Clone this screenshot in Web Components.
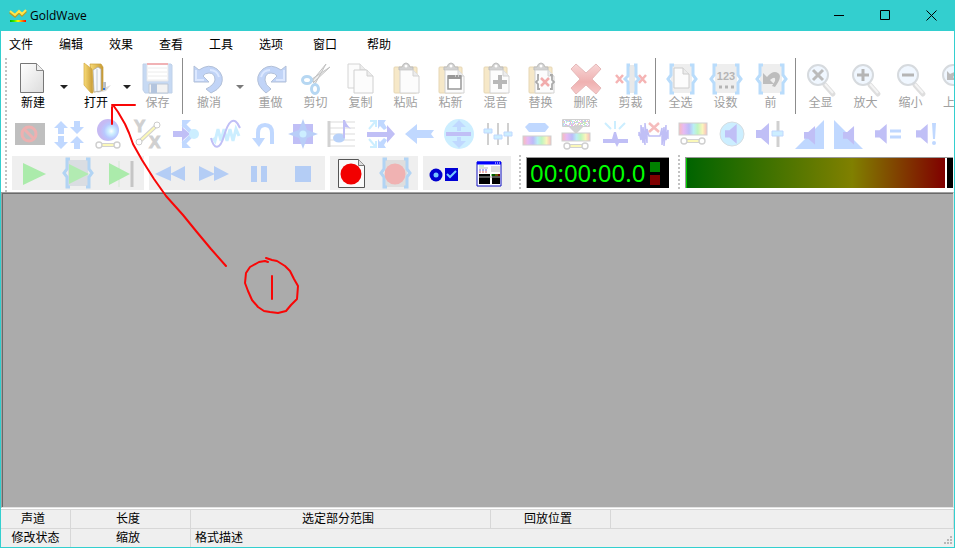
<!DOCTYPE html>
<html lang="zh-CN">
<head>
<meta charset="utf-8">
<title>GoldWave</title>
<style>
html,body{margin:0;height:100%}
body{font:12px/16px "Liberation Sans","Noto Sans CJK SC",sans-serif;color:#000;overflow:hidden}
</style>
</head>
<body>
<gw-app></gw-app>
<script>
const define = (name, css, html) => {
  const t = document.createElement('template');
  t.innerHTML = `<style>*{box-sizing:border-box}button{font:inherit;color:inherit;background:none;border:0;padding:0;margin:0}${css}</style>`;
  customElements.define(name, class extends HTMLElement {
    constructor() {
      super();
      this.attachShadow({mode: 'open'});
    }
    connectedCallback() {
      if (this.shadowRoot.firstChild) return;
      const body = document.createElement('template');
      body.innerHTML = typeof html === 'function' ? html(this) : html;
      this.shadowRoot.append(t.content.cloneNode(true), body.content.cloneNode(true));
    }
  });
};

/* Shared icon parts */
const page = (x, y, w, h, s = '#c4c4c4') => `<path d="M${x} ${y}h${w-6}l6 6v${h-6}h-${w}z" fill="#fcfcfc" stroke="${s}"/><path d="M${x+w-6} ${y}v6h6" fill="#ececec" stroke="${s}"/>`;
const clip = `<rect x="4" y="4" width="23" height="26" rx="1" fill="#f6e8c8" stroke="#e6d6b4"/><path d="M9 7V4h3q1-4 4-4t4 4h3v3z" fill="#d2d2d2" stroke="#bdbdbd"/><circle cx="16" cy="3" r="1.5" fill="#fff"/>` + page(10, 7, 19, 23, '#d2d2d2');
const brace = (c = '#b9dcfb', a = 2, b = 30, w = 3) => `<path d="M${a+6} 2h-3v10l-3 4 3 4v10h3M${b-6} 2h3v10l3 4-3 4v10h-3" fill="none" stroke="${c}" stroke-width="${w}"/>`;
const lens = `<path d="M20 22l8 9" stroke="#dedede" stroke-width="5" stroke-linecap="round"/><path d="M20 21l8 9" stroke="#f4f4f4" stroke-width="2"/><circle cx="13" cy="12" r="10" fill="#f0f7ff" stroke="#d6dade" stroke-width="2"/>`;
const bar = (y, a = 7, b = 25) => `<path d="M${a} ${y}h${b-a}" stroke="#d2d2d2" stroke-width="4"/><path d="M${a} ${y}h${b-a}" stroke="#fbf8b8" stroke-width="2"/><g fill="#fff" stroke="#cfcfcf" stroke-width="1.4"><circle cx="${a}" cy="${y}" r="3"/><circle cx="${b}" cy="${y}" r="3"/></g>`;
const rainbow = (x, y, w, h) => `<defs><linearGradient id="r"><stop offset="0" stop-color="#f8bcbc"/><stop offset=".17" stop-color="#e6baf4"/><stop offset=".36" stop-color="#bcbcf8"/><stop offset=".52" stop-color="#baeef4"/><stop offset=".67" stop-color="#c0f5c0"/><stop offset=".84" stop-color="#faf5bc"/><stop offset="1" stop-color="#f8bcbc"/></linearGradient></defs><rect x="${x}" y="${y}" width="${w}" height="${h}" fill="url(#r)" stroke="#d0d0d0"/>`;
const speaker = (x, y, s = 1) => `<path transform="translate(${x} ${y}) scale(${s})" d="M0 7h5L13 0v22L5 15H0z" fill="#c0bff6"/>`;
const B = '#c0d8ff', P = '#c0bff6', L = '#cceeff';
const noise = () => {
  let r = '', n = 7;
  const c = ['#e8b6ec', '#b8eaf0', '#c4eeb8', '#f2dcb2', '#c4c4ee', '#ffffff', '#ffffff'];
  for (let i = 0; i < 156; i++) {
    n = (n * 1103 + 12345) % 65521;
    r += `<path d="M${3 + i % 26} ${2 + Math.floor(i / 26)}h1v1h-1z" fill="${c[n % 7]}"/>`;
  }
  return r;
};

const icons = {
  new: `<defs><linearGradient id="g" x2="1" y2="1"><stop stop-color="#fff"/><stop offset="1" stop-color="#dcdcdc"/></linearGradient></defs><path d="M4.500 .5h16l7 7v22h-23z" fill="url(#g)" stroke="#777"/><path d="M20.500 .5v7h7" fill="#eee" stroke="#888"/>`,
  open: `<defs><linearGradient id="g"><stop stop-color="#f8db77"/><stop offset="1" stop-color="#c79a34"/></linearGradient></defs><path d="M20 27l12-5-5 6-9 2z" fill="#ddd"/><path d="M11 1h11l2 3v23l-9 2z" fill="url(#g)" stroke="#c99d37" stroke-width=".7"/><path d="M14 7l5-3 3 2v22l-7 1z" fill="#f7f9fb" stroke="#a5a5a5" stroke-width=".7"/><path d="M18 6v22" stroke="#c3ccd4"/><path d="M5 0l8 6 1 24h-2l-7-8z" fill="url(#g)" stroke="#d3a944" stroke-width=".7"/><path d="M24 19h3v8h-3z" fill="#b9bfc5"/><path d="M24 25h2v2h-2z" fill="#3676d8"/>`,
  save: `<path d="M1 1h28l1 1v28H3l-2-3z" fill="#c6d9f3" stroke="#c0d1e8"/><path d="M5 1h21v17H5z" fill="#fff" stroke="#e3e5e9"/><path d="M5 1h21" stroke="#f1b2b5" stroke-width="2"/><path d="M6 5h19M6 9h19M6 13h19M6 17h19" stroke="#ececec"/><path d="M7 21h19v9H7z" fill="#f2f2f2" stroke="#bcc6d4"/><path d="M9 21h6v9H9z" fill="#b4c5de"/>`,
  undo: `<path d="M2 3l5 4q10-7 18-1 8 7 4 16-3 5-10 8l-5-4q8-4 9-9 0-7-6-7-4 0-6 3l6 6H2z" fill="#c1d4f7" stroke="#b2c0d8"/><path d="M4 7v10h8M18 7q7 0 9 7" fill="none" stroke="#dce8ff" stroke-width="2"/>`,
  redo: `<path d="M31 3l-5 4Q16 0 8 6q-8 7-4 16 3 5 7 8l5-4q-6-4-6-9 0-7 6-7 4 0 6 3l-6 6h15z" fill="#c1d4f7" stroke="#b2c0d8"/><path d="M29 7v10h-8M15 7q-7 0-9 7" fill="none" stroke="#dce8ff" stroke-width="2"/>`,
  cut: `<path d="M26 1L15 21l-3-3zM30 4L14 19l-2-3z" fill="#eee" stroke="#c2c2c2"/><g fill="none" stroke="#b6d7f2" stroke-width="3"><ellipse cx="7" cy="17" rx="4.500" ry="3.500"/><ellipse cx="15" cy="26" rx="3.500" ry="4.500"/></g>`,
  copy: page(3, 1, 18, 24, '#d4d4d4') + page(9, 7, 19, 23, '#d0d0d0'),
  paste: clip,
  pastenew: clip + '<path d="M13 13h13v13H13z" fill="#fff" stroke="#999" stroke-width="1.500"/><path d="M13 14h13" stroke="#999" stroke-width="4"/><path d="M20 13h1m2 0h1" stroke="#fff"/>',
  mix: clip + '<path d="M20 12v14M13 19h14" stroke="#b8b8b8" stroke-width="4"/>',
  replace: clip + '<path d="M14 12h-1v5l-2 2 2 2v5h2M25 12h2v5l2 2-2 2v5h-2" fill="none" stroke="#aaa" stroke-width="1.800"/><path d="M16 15l8 8M24 15l-8 8" stroke="#f1acac" stroke-width="2.500"/>',
  delete: `<defs><linearGradient id="g" y2="1" x2="0"><stop stop-color="#f8d6d6"/><stop offset=".6" stop-color="#efb1b1"/><stop offset="1" stop-color="#f7c9c9"/></linearGradient></defs><path d="M6 1l10 9L26 1l5 5-9 10 9 9-5 6-10-9-10 9-5-6 9-9L1 6z" fill="url(#g)" stroke="#e6b9b9"/>`,
  trim: `<rect x="14" y="2" width="6" height="28" fill="#e9e9e9"/><path d="M15 2h-2v11l-3 3 3 3v11h2M19 2h2v11l3 3-3 3v11h-2" fill="none" stroke="#b9dcfb" stroke-width="3"/><path d="M1 12l7 8M8 12l-7 8M24 12l7 8M31 12l-7 8" stroke="#f5b4b4" stroke-width="2.500"/>`,
  selall: `<rect x="6" y="1" width="21" height="29" fill="#eee"/>` + brace('#b9dcfb', 3, 31) + page(9, 5, 15, 20, '#ccc'),
  set: `<rect x="5" y="1" width="22" height="29" fill="#eee"/>` + brace('#b9dcfb', 1, 31) + '<text x="16" y="17" text-anchor="middle" font-family="Liberation Sans, sans-serif" font-weight="bold" font-size="11" fill="#b5b5b5">123</text><path d="M9 24h3m3 0h3m3 0h3" stroke="#b5b5b5" stroke-width="3"/>',
  prev: `<rect x="5" y="1" width="22" height="29" fill="#eee"/>` + brace('#b9dcfb', 2, 31) + '<path d="M8 10v11h11l-4-4q6-5 5 1l-3 5 3 1q8-11 3-14-5-3-11 4z" fill="#bdbdbd"/>',
  zoomall: lens + '<path d="M8 7l10 10M18 7L8 17" stroke="#bbb" stroke-width="3"/>',
  zoomin: lens + '<path d="M13 6v12M7 12h12" stroke="#b5b5b5" stroke-width="3"/>',
  zoomout: lens + '<path d="M7 12h12" stroke="#b5b5b5" stroke-width="3"/>',
  zoomprev: lens + '<path d="M7 8v9h9l-3-3q5-5 4 2l-3 4q8-4 5-9-3-4-9 0z" fill="#bbb"/>',

  censor: `<path d="M1 5h30v22H1z" fill="#bfbfbf"/><circle cx="15" cy="16" r="7" fill="none" stroke="#eeb0b0" stroke-width="3"/><path d="M10 11l10 10" stroke="#eeb0b0" stroke-width="3"/>`,
  doppler: `<path d="M8 3l7 7h-4v6H5v-6H1zM24 16l-7-7h4V3h6v6h4zM8 31l-7-7h4v-6h6v6h4zM24 18l7 7h-4v6h-6v-6h-4z" fill="${B}"/>`,
  dynamics: `<defs><radialGradient id="g" cx=".65" cy=".55"><stop stop-color="#fff"/><stop offset=".3" stop-color="${L}"/><stop offset=".65" stop-color="#b8c8ff"/><stop offset="1" stop-color="#c6baf3"/></radialGradient></defs><circle cx="16" cy="12" r="11" fill="url(#g)"/>` + bar(27),
  expression: `<g fill="#d0d0d0" stroke="#d0d0d0" font-family="Liberation Sans, sans-serif" font-weight="bold" font-size="17"><text x="3" y="14">Y</text><text x="18" y="30">X</text></g><path d="M8 24L25 8" stroke="#d0d0d0" stroke-width="4"/><path d="M8 24L25 8" stroke="#fbf8b8" stroke-width="2"/><circle cx="8" cy="24" r="3" fill="#fff" stroke="#ccc"/><circle cx="26" cy="7" r="3" fill="#fff" stroke="#ccc"/>`,
  echo: `<path d="M23 16L13 6m10 10L13 26" stroke="${B}" stroke-width="4"/><path d="M12 2h9l-9 9zM12 30h9l-9-9z" fill="${B}"/><path d="M3 13h9V9l8 7-8 7v-4H3z" fill="${P}"/><circle cx="24" cy="16" r="5" fill="${L}"/>`,
  filter: `<path d="M4 20l2 3 3-12 3 12 3-12 3 12 3-12 3 12 3-12 3 7" fill="none" stroke="${L}" stroke-width="3"/><path d="M2 20c3 12 9 12 13-2S25-4 31 10" fill="none" stroke="${P}" stroke-width="2"/>`,
  flip: `<path d="M10 22v-7q0-8 7-8t7 8v11" fill="none" stroke="${B}" stroke-width="4"/><path d="M4 20h13l-6 9z" fill="${B}"/>`,
  mechanize: `<path d="M6 6h20v20H6z" fill="${P}"/><path d="M16 1l4 11 11 4-11 4-4 11-4-11-11-4 11-4z" fill="#b9cef8"/><circle cx="16" cy="16" r="3.500" fill="${L}"/>`,
  pitch: `<path d="M3 4h26M3 10h26M3 16h26M3 22h26M3 28h26" stroke="#dcdcdc" stroke-width="1.200"/><path d="M3 3v26" stroke="#d2d2d2" stroke-width="3"/><ellipse cx="13" cy="20" rx="6" ry="4.500" fill="#b9d2f9"/><path d="M17 2h2q1 4 6 9-3-2-6-2v11h-2z" fill="${P}"/>`,
  reverb: `<path d="M2 14h20V7l8 9-8 9v-6H2z" fill="${P}"/><path d="M5 3h6v6M4 11l6-7M5 29h6v-6M4 21l6 7" stroke="${L}" stroke-width="2" fill="none"/><path d="M13 2h8l-2 3 3 5-3 2-4-4-2 3zM13 30h8l-2-3 3-5-3-2-4 4-2-3z" fill="${B}"/>`,
  reverse: `<path d="M1 16l12-10v6h17l-3 4 3 4H13v6z" fill="${B}"/>`,
  resample: `<circle cx="16" cy="16" r="15" fill="${L}"/><path d="M16 2l7 7h-5v4h-4V9H9zM16 30l7-7h-5v-4h-4v4H9z" fill="${B}"/><path d="M3 14h25v4H3z" fill="${P}"/>`,
  equalizer: `<path d="M6 5v22M16 5v22M26 5v22" stroke="#d0d0d0" stroke-width="2"/><path d="M2 11h8v4H2zM12 17h8v4h-8zM22 14h8v4h-8z" fill="${L}" stroke="${B}"/>`,
  smooth: `<path d="M8 5h16l4 4-4 5H8l-4-5z" fill="${B}"/>` + rainbow(2, 18, 28, 9),
  noise: noise() + '<path d="M2.500 1.500h27v7h-27z" fill="none" stroke="#d0d0d0"/><path d="M9 9h14l-7 7z" fill="#d2d2d2"/>' + rainbow(2, 15, 28, 8) + bar(28),
  pop: `<path d="M16 3v8M6 5l6 6M26 5l-6 6" stroke="${L}" stroke-width="2"/><path d="M4 21h9l2-7h2l2 7h10v4h-9l-2 4-2-4H4z" fill="${P}"/>`,
  silence: `<path d="M1 18V14l2 8V7l2 18V9l2 18V5l2 20V11l2 7h11l2-8v17l2-18v19l2-21v15l2-10v9" fill="none" stroke="${P}" stroke-width="1.500"/><path d="M11 5l10 9M21 5l-10 9" stroke="#f5bcbc" stroke-width="2.500"/>`,
  spectrum: rainbow(2, 5, 28, 12) + bar(23),
  volume: `<circle cx="16" cy="16" r="12" fill="${L}" stroke="#d6dde0"/>` + speaker(9, 6, .9),
  volset: speaker(1, 5) + `<path d="M23 3v26" stroke="#d0d0d0" stroke-width="3"/><path d="M17 13h11v5H17z" fill="${L}" stroke="${B}"/>`,
  fadein: `<path d="M1 31L30 2v29z" fill="${B}"/>` + speaker(10, 8, .85),
  fadeout: `<path d="M1 31V2l29 29z" fill="${B}"/>` + speaker(10, 8, .85),
  match: speaker(3, 6, .9) + `<path d="M18 13h11M18 19h11" stroke="${B}" stroke-width="3"/>`,
  maximize: speaker(5, 6, .9) + `<path d="M21 5h4l-1 16h-2z" fill="${B}"/><circle cx="23" cy="25" r="2" fill="${B}"/>`,

  play: `<path d="M5 6l23 11L5 28z" fill="#abebab"/>`,
  playsel: `<path d="M6 3h20v26H6z" fill="#dadde2"/>${brace('#b2d4f4', 2, 30)}<path d="M7 7l20 10L7 27z" fill="#b2ebb2"/>`,
  playend: `<path d="M13 4v26" stroke="#d5e8d5"/><path d="M3 6l21 11L3 28z" fill="#abebab"/><path d="M26 4v26" stroke="#c5c5c5" stroke-width="3"/>`,
  rewind: `<path d="M16 9v15L0 17zM30 9v15l-15-7z" fill="#b4cdf5"/>`,
  forward: `<path d="M0 9v15l16-7zM15 9v15l15-7z" fill="#b4cdf5"/>`,
  pause: `<path d="M8 9h6v16H8zM18 9h6v16h-6z" fill="#b4cdf5"/>`,
  stop: `<path d="M8 9h16v16H8z" fill="#b4cdf5"/>`,
  record: `<path d="M2.500 2.500h20l6 6v22h-26z" fill="#fafafa" stroke="#555"/><path d="M22.500 2.500v6h6" fill="#ddd" stroke="#777"/><circle cx="15" cy="17" r="10.500" fill="#f20000"/>`,
  recordsel: `<path d="M5 3h22v27H5z" fill="#dedede"/>${brace('#b2d4f4', 1, 30)}<circle cx="15" cy="17" r="10.500" fill="#f0b2b2"/>`,
  options: `<circle cx="7" cy="18" r="6.500" fill="#0000cf"/><circle cx="7" cy="18" r="2.500" fill="#75c7ff"/><path d="M16 11h13v13H16z" fill="#0000d5"/><path d="M18 17l3 3 6-6" fill="none" stroke="#75c7ff" stroke-width="2"/>`,
  window: `<path d="M4 5h24v24H4z" fill="#fff" stroke="#1010c0"/><path d="M4 6h24" stroke="#00f" stroke-width="3"/><path d="M22 6h1m1 0h1m1 0h1" stroke="#fff"/><path d="M6 9h5" stroke="#9d9"/><path d="M6 11h9M18 10h9m-9 2h9m-9 2h9" stroke="#bbb"/><path d="M6 13h8" stroke="#66d" stroke-dasharray="2 1"/><path d="M6 15h8" stroke="#d66" stroke-dasharray="2 1"/><path d="M6 17h11v10H6zM19 17h8v10h-8z" fill="#000"/><path d="M18 18h4" stroke="#0a0"/><path d="M22 18h3" stroke="#bb0"/><path d="M25 18h2" stroke="#d00"/><path d="M6 20h21" stroke="#aaa"/>`
};

define('gw-icon', ':host{display:block;width:32px;height:32px;flex:none}svg{display:block;overflow:visible}',
  el => `<svg width="32" height="32" viewBox="0 0 32 32" aria-hidden="true">${icons[el.getAttribute('name')]}</svg>`);

define('gw-grip', ':host{display:block;flex:none;width:2px;background:repeating-linear-gradient(#c2c2c2 0 2px,transparent 2px 4px)}', '');

define('gw-titlebar', `:host{display:flex;height:31px;align-items:center;background:#33cfcf;padding-left:8px;font:12px/16px "Open Sans",sans-serif}
.name{flex:1;padding-left:3px}button{width:46px;height:31px;display:grid;place-items:center}svg{display:block}`,
`<svg width="18" height="14" viewBox="0 0 18 14" aria-hidden="true"><defs><linearGradient id="c"><stop stop-color="#0b0"/><stop offset=".25" stop-color="#3e0"/><stop offset=".5" stop-color="#ff0"/><stop offset="1" stop-color="#f00"/></linearGradient></defs><path d="M1 3l5 4 4-4 3 3 4-4" fill="none" stroke="#b99a20" stroke-width="3"/><path d="M1 2l5 4 4-4 3 3 4-4" fill="none" stroke="#ffe74c" stroke-width="2"/><rect x="1" y="11" width="16" height="2" fill="url(#c)"/></svg>
<span class="name"><slot></slot></span>
<button aria-label="最小化"><svg width="11" height="11"><path d="M0 5.500h10" stroke="#000"/></svg></button>
<button aria-label="最大化"><svg width="11" height="11"><path d="M.5.5h9v9h-9z" fill="none" stroke="#000"/></svg></button>
<button aria-label="关闭"><svg width="11" height="11"><path d="M.5.5l10 10M10.500.5l-10 10" stroke="#000"/></svg></button>`);

define('gw-menubar', ':host{display:flex;height:27px;align-items:center;padding-left:8px;gap:26px}button{line-height:20px}.wide{margin:0 4px}',
`<button>文件</button><button>编辑</button><button>效果</button><button>查看</button><button>工具</button><button>选项</button><button class="wide">窗口</button><button>帮助</button>`);

define('gw-tool', `:host{display:flex;flex:none}.main{width:45px;height:57px;padding-top:5px;display:flex;flex-direction:column;align-items:center}
.main:disabled{color:#a0a0a0}:host([menu]) span{padding-left:3px}:host([cut]) span{align-self:flex-start;padding-left:10px}
.drop{width:18px;display:grid;place-items:center;padding-left:2px}.drop:disabled{opacity:.6}`,
  el => {
    const dis = el.hasAttribute('off') ? 'disabled' : '';
    return `<button class="main" ${dis}><gw-icon name="${el.getAttribute('icon')}"></gw-icon><span><slot></slot></span></button>` +
      (el.hasAttribute('menu') ? `<button class="drop" ${dis} aria-label="更多"><svg width="8" height="4"><path d="M0 0h8l-4 4z" fill="#222"/></svg></button>` : '');
  });

define('gw-sep', ':host{display:block;flex:none;width:5px;height:56px;padding-left:2px}i{display:block;width:1px;height:100%;background:#8c8c8c}', '<i></i>');

const off = (icon, text) => `<gw-tool off icon="${icon}">${text}</gw-tool>`;
define('gw-main-tools', ':host{display:flex;height:57px;overflow:hidden;padding-left:2px}',
  '<gw-tool icon="new" menu>新建</gw-tool><gw-tool icon="open" menu>打开</gw-tool>' + off('save', '保存') + '<gw-sep></gw-sep><gw-tool off icon="undo" menu>撤消</gw-tool>' +
  [['redo', '重做'], ['cut', '剪切'], ['copy', '复制'], ['paste', '粘贴'], ['pastenew', '粘新'], ['mix', '混音'], ['replace', '替换'], ['delete', '删除'], ['trim', '剪裁']].map(a => off(...a)).join('') +
  '<gw-sep></gw-sep>' + [['selall', '全选'], ['set', '设数'], ['prev', '前']].map(a => off(...a)).join('') +
  '<gw-sep></gw-sep>' + [['zoomall', '全显'], ['zoomin', '放大'], ['zoomout', '缩小']].map(a => off(...a)).join('') +
  '<gw-tool off cut icon="zoomprev">上</gw-tool>');

define('gw-effects', ':host{display:flex;height:38px;overflow:hidden;padding-left:3px}button{flex:none;width:39px;display:grid;place-items:center}',
  'censor doppler dynamics expression echo filter flip mechanize pitch reverb reverse resample equalizer smooth noise pop silence spectrum volume volset fadein fadeout match maximize'.split(' ')
    .map(n => `<button disabled aria-label="${n}"><gw-icon name="${n}"></gw-icon></button>`).join(''));

define('gw-group', ':host{display:flex;flex:none;background:#efefef;height:34px}button{width:44px;display:grid;place-items:center}',
  el => el.getAttribute('items').split(' ').map(n => `<button aria-label="${n}"><gw-icon name="${n}"></gw-icon></button>`).join(''));

define('gw-clock', `:host{box-sizing:border-box;display:flex;flex:none;align-items:center;justify-content:space-between;width:143px;height:31px;padding:0 9px 0 3px;background:#000;border-top:1px solid #999;border-left:1px solid #999;color:#0f0;font:24px/30px "Noto Sans",sans-serif}
.led{display:grid;gap:3px}i{display:block;width:10px;height:10px;background:#008000}i+i{background:#800000}`,
  '<span><slot></slot></span><span class="led"><i></i><i></i></span>');

define('gw-meter', `:host{box-sizing:border-box;display:flex;flex:1;min-width:0;height:31px;border-top:1px solid #999;border-left:1px solid #999;margin-right:1px}
.level{flex:1;border-left:1px solid #0c0;background:linear-gradient(90deg,#006400,#808000 64%,#800000)}.peak{width:8px;background:#000;border-left:2px solid #fff}`,
  '<div class="level"></div><div class="peak"></div>');

define('gw-transport', ':host{box-sizing:border-box;display:flex;height:39px;padding:3px 0 0 5px;gap:5px}gw-grip{height:36px;margin:-1px 0 0 3px}gw-clock,gw-meter{margin-top:1px}.m{margin-left:4px}',
`<gw-group items="play playsel playend"></gw-group><gw-group items="rewind forward pause stop"></gw-group><gw-group items="record recordsel"></gw-group><gw-group items="options window"></gw-group>
<gw-grip></gw-grip><gw-clock>00:00:00.0</gw-clock><gw-grip class="m"></gw-grip><gw-meter></gw-meter>`);

define('gw-toolbars', ':host{display:flex;padding-left:4px;background:#fff}.rows{flex:1;min-width:0}',
`<gw-grip></gw-grip><div class="rows"><gw-main-tools></gw-main-tools><gw-effects></gw-effects><gw-transport></gw-transport></div>`);

define('gw-workspace', ':host{display:block;flex:1;min-height:0;margin-bottom:1px;background:#ababab;border:1px solid;border-color:#a0a0a0 #e3e3e3 #e3e3e3 #a0a0a0;box-shadow:inset 1px 1px #696969}', '');

define('gw-status', `:host{display:block;background:#efefef;border-top:1px solid #d7d7d7}
.row{display:grid;grid-template-columns:70px 120px 300px 120px 1fr;height:18px;line-height:18px;text-align:center}
.row+.row{height:19px;border-top:1px solid #d7d7d7}.row>*{border-right:1px solid #d7d7d7;padding-right:5px}.row .first{padding-right:0}.row .plain{border:0;padding-right:0}.left{text-align:left;padding-left:4px}
.end{display:flex;justify-content:flex-end;align-items:flex-end}svg{display:block}`,
`<div class="row"><span>声道</span><span>长度</span><span>选定部分范围</span><span>回放位置</span><span></span></div>
<div class="row"><span class="first">修改状态</span><span>缩放</span><span class="left plain">格式描述</span><span class="plain"></span><span class="end plain"><svg width="10" height="11"><path d="M6 1h2M3 4h2m1 0h2M0 7h2m1 0h2m1 0h2" stroke="#b8b8b8" stroke-width="2"/></svg></span></div>`);

/* Freehand notes lie above the window content */
define('gw-ink', ':host{position:absolute;left:0;top:0;pointer-events:none}svg{display:block}',
`<svg width="310" height="330" viewBox="1 0 310 330" fill="none" stroke="#f90606" stroke-width="2" stroke-linecap="round" stroke-linejoin="round" aria-hidden="true">
<path d="M112 124v-17M112 105h23M113 105l5 7 7 12 4 9 4 11 9 16 12 19 12 17 17 19 13 16 15 18 15 17M272 276v23"/>
<path d="M268 262l-3-1-6 1-9 5-4 6-1 10 3 8 4 9 6 7 6 4 6 1 8 1 8-2 5-6 6-6 1-13-4-7-4-8-5-5-8-5-5-1-6-2"/></svg>`);

define('gw-app', `:host{box-sizing:border-box;display:flex;flex-direction:column;height:100vh;background:#fff;border:solid #33cfcf;border-width:0 1px 1px;position:relative;overflow:hidden}`,
`<gw-titlebar>GoldWave</gw-titlebar><gw-menubar></gw-menubar><gw-toolbars></gw-toolbars><gw-workspace></gw-workspace><gw-status></gw-status><gw-ink></gw-ink>`);
</script>
</body>
</html>
